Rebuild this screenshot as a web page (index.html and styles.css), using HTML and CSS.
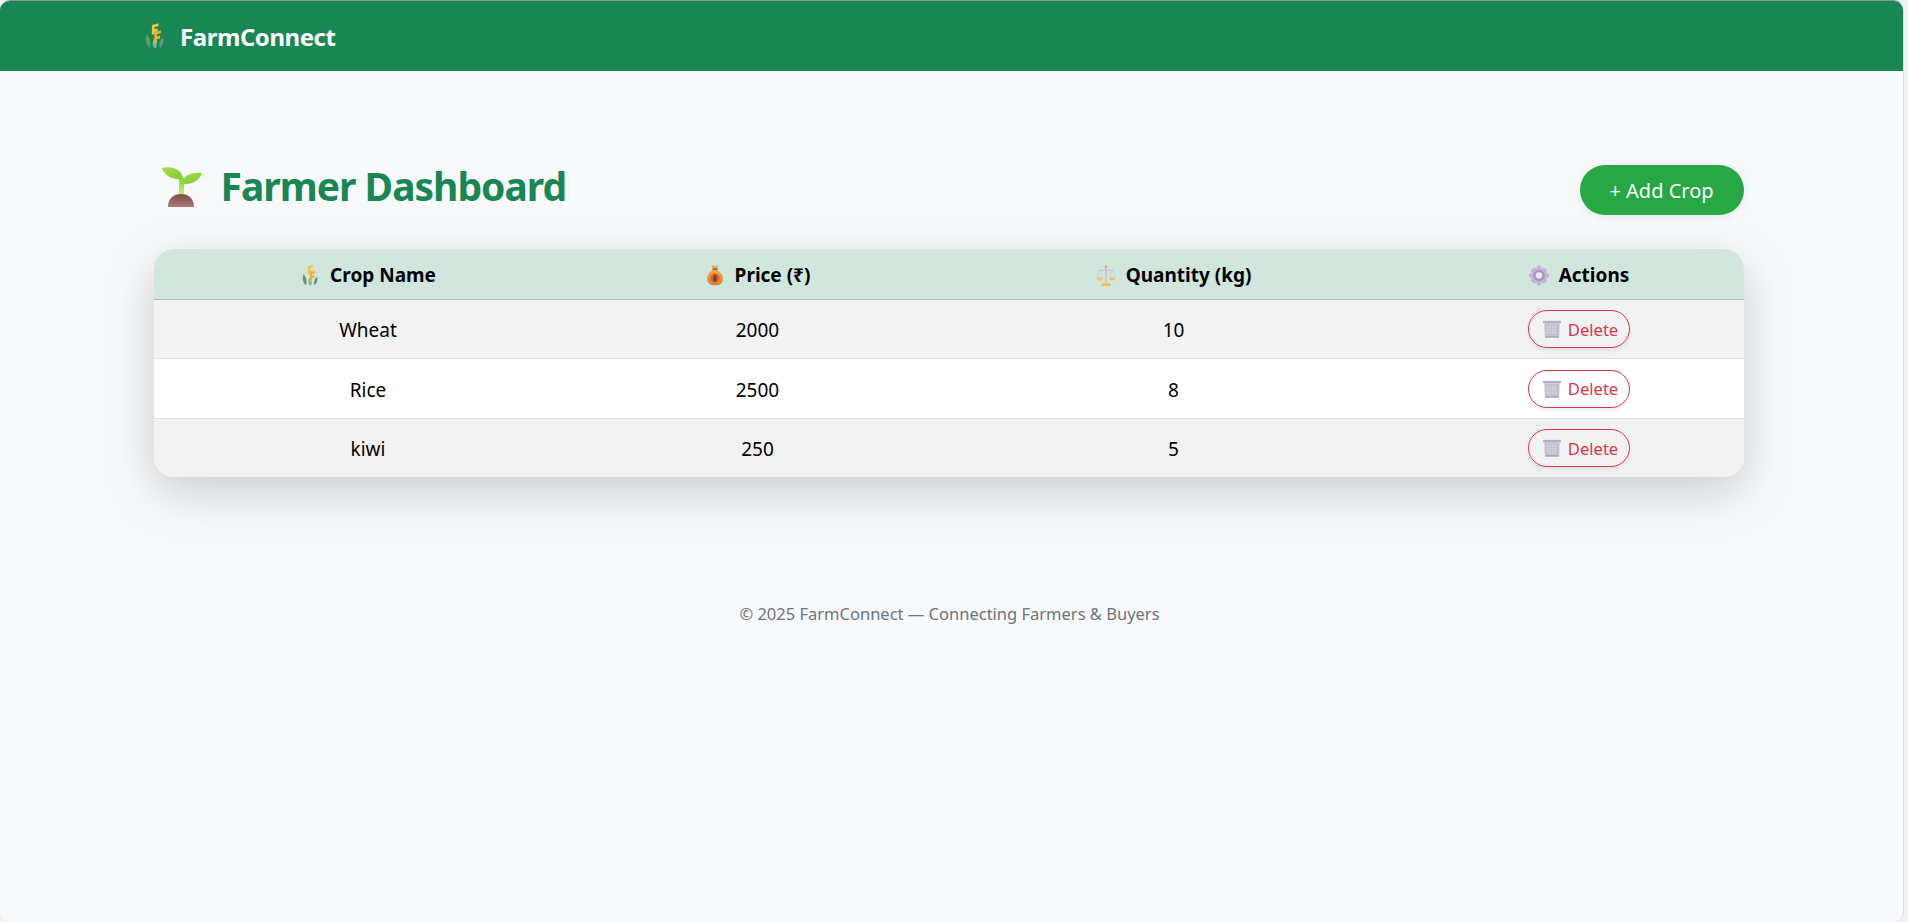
FILE: index.html
```html
<!DOCTYPE html>
<html lang="en">
<head>
  <meta charset="UTF-8">
  <title>Farmer Dashboard</title>
  <link rel="stylesheet" href="styles.css">
</head>

<body>

<svg class="sprites" width="0" height="0">
  <defs>
    <linearGradient id="g-leaf" x1="0" y1="0" x2="1" y2="1">
      <stop offset="0" stop-color="#a3e048"/>
      <stop offset="1" stop-color="#7fc93a"/>
    </linearGradient>
    <linearGradient id="g-stem" x1="0" y1="0" x2="0" y2="1">
      <stop offset="0" stop-color="#8fd63f"/>
      <stop offset="1" stop-color="#c5ee7a"/>
    </linearGradient>
    <linearGradient id="g-soil" x1="0" y1="0" x2="0" y2="1">
      <stop offset="0" stop-color="#7a4c3d"/>
      <stop offset="1" stop-color="#a97d7b"/>
    </linearGradient>
    <linearGradient id="g-bag" x1="0" y1="0" x2="0" y2="1">
      <stop offset="0" stop-color="#f4a544"/>
      <stop offset="1" stop-color="#e2803a"/>
    </linearGradient>
  </defs>
  <symbol id="i-rice" viewBox="0 0 24 32">
    <path d="M6 31C1 27 0 20 2 14c4 4 6 10 4 17z" fill="#5c9c6a"/>
    <path d="M19 31c4-3 5-8 4-13-4 3-6 8-4 13z" fill="#5f9a80"/>
    <path d="M13 32c-4-3-4-8-2-12 4 3 5 8 2 12z" fill="#7fb5a5"/>
    <path d="M9 2l8-2v3.500l-5 1.500v2.500l4-1v3.500l-4 1V14H8.500z" fill="#f8c63f"/>
    <path d="M12 11l8-2v3.500l-5 1.500v2.500l4-1v3.500l-4 1V25h-3.500z" fill="#f2ae35"/>
  </symbol>
  <symbol id="i-seedling" viewBox="0 0 40 40">
    <path d="M17 11h5v17h-5z" fill="url(#g-stem)"/>
    <path d="M0 1C8-1 20 1 21 12 12 13 3 10 0 1z" fill="url(#g-leaf)"/>
    <path d="M40 6C32 5 21 7 19 17 28 18 37 15 40 6z" fill="url(#g-leaf)"/>
    <path d="M6 40C6 31 12 27 19 27s13 4 13 13z" fill="url(#g-soil)"/>
  </symbol>
  <symbol id="i-bag" viewBox="0 0 24 32">
    <path d="M7 0l5 2 5-2-1.500 6h-7z" fill="#f2ab42"/>
    <path d="M8 5h8v3H8z" fill="#9c6538"/>
    <path d="M8 8C3 11 0 16 0 21c0 7 5 10 12 10s12-3 12-10c0-5-3-10-8-13z" fill="url(#g-bag)"/>
    <circle cx="12" cy="20" r="7" fill="#c9692f"/>
    <path d="M12 14.500v11M15 17h-4.500v3H13.500v3H9" stroke="#6b3a24" stroke-width="1.600" fill="none"/>
  </symbol>
  <symbol id="i-scale" viewBox="0 0 36 40">
    <path d="M17 4h2v30h-2z" fill="#bdb7cf"/>
    <path d="M5 9h26v2.200H5z" fill="#c8c2d8"/>
    <path d="M6 10 .5 24M6 10l5.500 14M30 10l-5.500 14M30 10l5.500 14" stroke="#c9c4d6" stroke-width="1" fill="none"/>
    <path d="M0 24h12c0 4-3 6-6 6s-6-2-6-6zM24 24h12c0 4-3 6-6 6s-6-2-6-6z" fill="#fbc066"/>
    <path d="M9 40c0-4 4-6 9-6s9 2 9 6z" fill="#f9b94f"/>
    <circle cx="18" cy="3" r="2.500" fill="#f4a93c"/>
  </symbol>
  <symbol id="i-gear" viewBox="0 0 24 24">
    <path d="M10 0h4l1 3.500 3-1.500 4 4-1.500 3L24 10v4l-3.500 1 1.500 3-4 4-3-1.500-1 3.500h-4l-1-3.500L6 22l-4-4 1.500-3L0 14v-4l3.500-1L2 6l4-4 3 1.500z" fill="#c4b5d8"/>
    <circle cx="12" cy="12" r="7" fill="#a69ab6"/>
    <circle cx="12" cy="12" r="3.800" fill="#ebe8f0"/>
  </symbol>
  <symbol id="i-bin" viewBox="0 0 20 20">
    <path d="M0 1h20v2.500H0z" fill="#b4b1c2"/>
    <path d="M1.500 3.500h17l-.6 16H2.100z" fill="#c3c0cf"/>
    <path d="M5 6v11M8 6v11M11 6v11M14 6v11M4 8h12M4 11h12M4 14h12" stroke="#e4e2ea" stroke-width="1" stroke-dasharray="1 1"/>
    <path d="M2.500 18h15v1.500h-15z" fill="#a8a5b6"/>
  </symbol>
</svg>

<div class="page">

  <nav class="navbar">
    <a class="brand" href="#"><svg class="ico ico-brand"><use href="#i-rice"/></svg>FarmConnect</a>
  </nav>

  <main class="content">
    <div class="top-row">
      <h1><svg class="ico ico-title"><use href="#i-seedling"/></svg>Farmer Dashboard</h1>
      <a class="btn-add" href="#">+ Add Crop</a>
    </div>

    <div class="table-wrap">
      <table>
        <tr>
          <th class="col-name"><svg class="ico ico-head"><use href="#i-rice"/></svg>Crop Name</th>
          <th class="col-price"><svg class="ico ico-head"><use href="#i-bag"/></svg>Price (₹)</th>
          <th class="col-qty"><svg class="ico ico-head"><use href="#i-scale"/></svg>Quantity (kg)</th>
          <th class="col-act"><svg class="ico ico-head"><use href="#i-gear"/></svg>Actions</th>
        </tr>
        <tr>
          <td>Wheat</td>
          <td>2000</td>
          <td>10</td>
          <td><button class="btn-delete"><svg class="ico ico-bin"><use href="#i-bin"/></svg>Delete</button></td>
        </tr>
        <tr class="row-tall">
          <td>Rice</td>
          <td>2500</td>
          <td>8</td>
          <td><button class="btn-delete"><svg class="ico ico-bin"><use href="#i-bin"/></svg>Delete</button></td>
        </tr>
        <tr>
          <td>kiwi</td>
          <td>250</td>
          <td>5</td>
          <td><button class="btn-delete"><svg class="ico ico-bin"><use href="#i-bin"/></svg>Delete</button></td>
        </tr>
      </table>
    </div>
  </main>

  <footer class="footer">© 2025 FarmConnect — Connecting Farmers &amp; Buyers</footer>

</div>

</body>
</html>
```

FILE: styles.css
```css
* {
  box-sizing: border-box;
}
body {
  background-color: #f3f3f5;
  font-family: "Noto Sans", sans-serif;
  margin: 0;
  padding: 0 4px 0 0;
  height: 922px;
  overflow: hidden;
}
.sprites {
  display: block;
  height: 0;
}
.page {
  height: 922px;
  background: #f8f9fa;
  border-radius: 10px;
  border-top: 1px solid #8f9a94;
  border-right: 1px solid #dcdcdf;
  overflow: hidden;
}
.ico {
  display: inline-block;
  vertical-align: middle;
}
.navbar {
  height: 70px;
  background: #198754;
  padding-left: 145px;
  display: flex;
  align-items: center;
}
.brand {
  color: #fff;
  font-size: 24px;
  font-weight: 700;
  text-decoration: none;
  display: flex;
  align-items: center;
  letter-spacing: -0.45px;
}
.ico-brand {
  width: 19px;
  height: 26px;
  margin-right: 16px;
}
.content {
  margin: 0 auto;
  padding: 94px 0 0;
  width: 1590px;
  position: relative;
  left: -3px;
}
.top-row {
  display: flex;
  justify-content: space-between;
  align-items: flex-start;
  height: 84px;
}
h1 {
  margin: 0;
  padding: 1px 0 0 8px;
  color: #198754;
  font-size: 39px;
  font-weight: 700;
  line-height: 40px;
  letter-spacing: -1px;
  display: flex;
  align-items: center;
}
.ico-title {
  width: 40px;
  height: 40px;
  margin-right: 19px;
  position: relative;
  top: 1px;
}
.btn-add {
  width: 164px;
  height: 50px;
  background: #28a745;
  color: #fff;
  border-radius: 25px;
  font-size: 20px;
  text-decoration: none;
  display: flex;
  align-items: center;
  justify-content: center;
  box-shadow: 0 2px 8px rgba(0,0,0,0.08);
}
.table-wrap {
  border-radius: 20px;
  background: #fff;
  box-shadow: 0 15px 50px rgba(0,0,0,0.18);
}
table {
  width: 100%;
  border-collapse: separate;
  border-spacing: 0;
  table-layout: fixed;
  font-size: 19px;
  color: #000;
}
th, td {
  text-align: center;
  vertical-align: middle;
  padding: 1px 0 0;
}
th {
  height: 51px;
  background: #d1e7dd;
  border-bottom: 1px solid #a9bdb4;
  font-weight: 700;
}
td {
  height: 59px;
  border-bottom: 1px solid #dee2e6;
  padding-top: 2px;
}
.row-tall td {
  height: 60px;
}
tr:nth-child(2) td, tr:nth-child(4) td {
  background: #f2f2f2;
}
tr:first-child th:first-child {
  border-top-left-radius: 20px;
}
tr:first-child th:last-child {
  border-top-right-radius: 20px;
}
tr:last-child td {
  height: 58px;
  border-bottom: none;
}
tr:last-child td:first-child {
  border-bottom-left-radius: 20px;
}
tr:last-child td:last-child {
  border-bottom-right-radius: 20px;
}
.col-name {
  width: 429px;
}
.col-price {
  width: 350px;
}
.col-qty {
  width: 482px;
}
.col-act {
  width: 329px;
}
.ico-head {
  width: 20px;
  height: 21px;
  margin-right: 10px;
  position: relative;
  top: -1px;
}
.btn-delete {
  width: 102px;
  height: 38px;
  margin: -2px 0 0 -1px;
  background: transparent;
  border: 1.5px solid #dc3545;
  border-radius: 19px;
  color: #dc3545;
  font-family: inherit;
  font-size: 16.6px;
  padding: 0 0 0 4px;
  display: inline-flex;
  align-items: center;
  justify-content: center;
  box-shadow: 0 2px 4px rgba(0,0,0,0.08);
}
.ico-bin {
  width: 18px;
  height: 18px;
  margin-right: 7px;
}
.footer {
  margin-top: 125px;
  text-align: center;
  font-size: 16.5px;
  color: #6c757d;
  padding-right: 4px;
}
```
